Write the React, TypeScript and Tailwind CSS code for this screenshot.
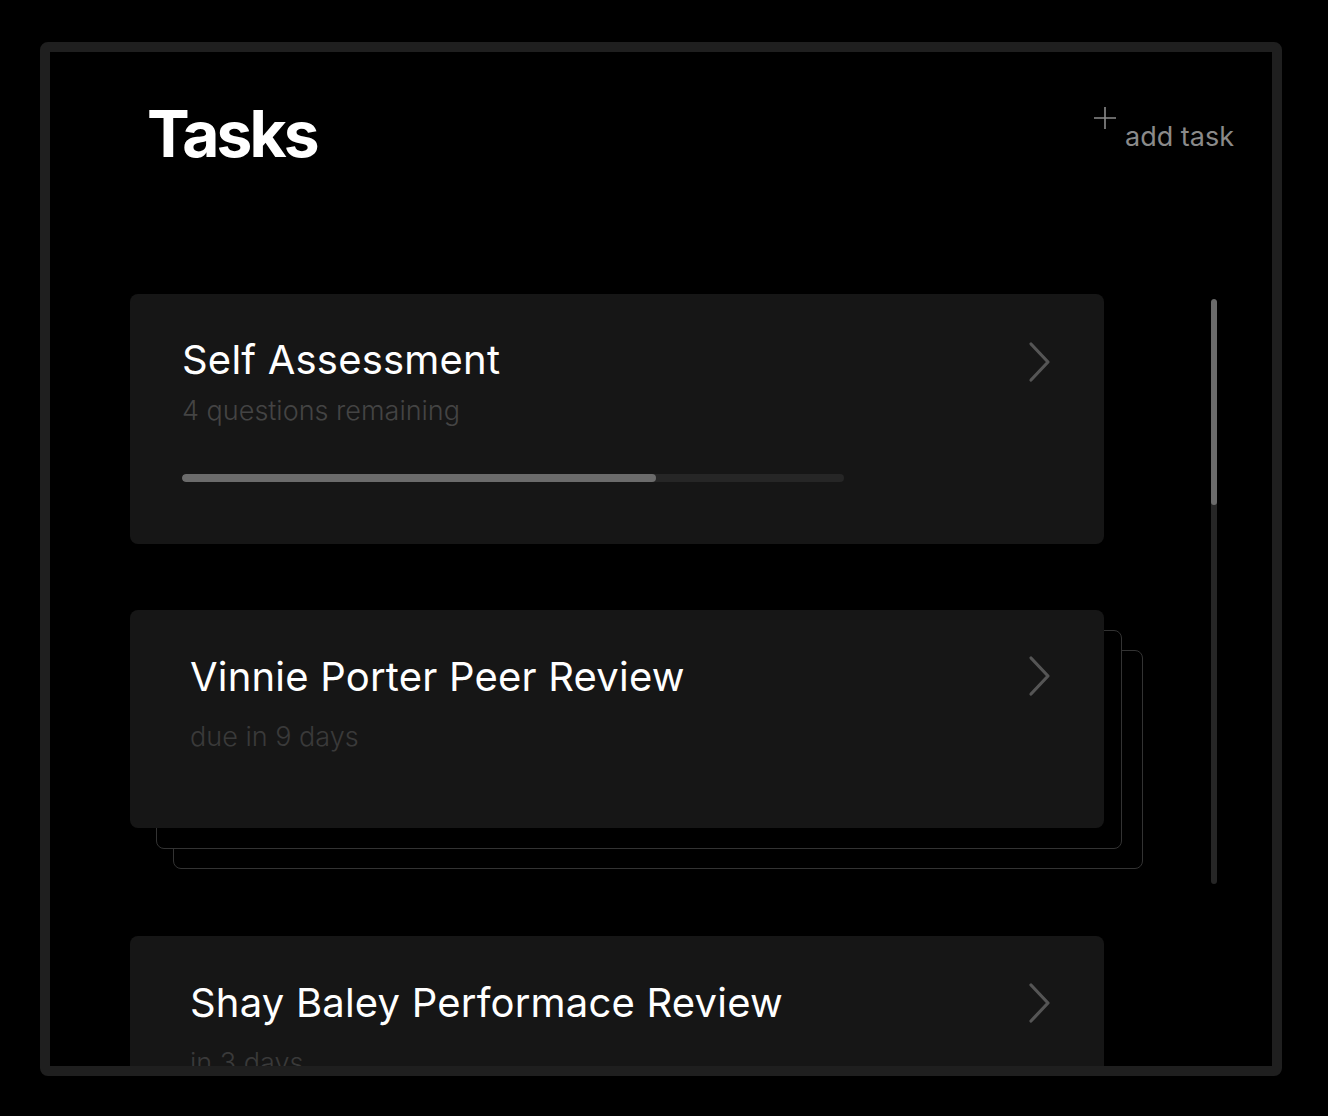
import React from "react";

function Chevron() {
  return (
    <svg width="24" height="42" viewBox="0 0 24 42" fill="none" className="shrink-0">
      <path d="M3 3 L20 21 L3 39" stroke="#555555" strokeWidth="3.2" strokeLinecap="round" strokeLinejoin="round" />
    </svg>
  );
}

export default function App() {
  return (
    <div className="w-[1328px] h-[1116px] bg-black pt-[42px] pl-[40px]" style={{ fontFamily: "Inter, 'Liberation Sans', sans-serif" }}>
      <div className="w-[1242px] h-[1034px] border-[10px] border-[#1f1f1f] rounded-[8px] overflow-hidden flex flex-col">
        <div className="flex justify-between items-start pl-[97px] pr-[38px] pt-[50px] h-[242px] shrink-0">
          <h1 className="text-[64px] font-bold text-white leading-none tracking-[-0.045em]">Tasks</h1>
          <div className="flex items-start text-[#8a8a8a]">
            <svg width="24" height="24" viewBox="0 0 24 24" className="mt-[4px]">
              <path d="M12 1 V23 M1 12 H23" stroke="#8a8a8a" strokeWidth="1.6" />
            </svg>
            <span className="text-[27px] leading-none mt-[21px] ml-[8px]">add task</span>
          </div>
        </div>
        <div className="flex pl-[80px] pr-[55px]">
          <div className="w-[974px] flex flex-col shrink-0">
            <div className="bg-[#161616] rounded-[8px] h-[250px] pl-[52px] pr-[52px] pt-[46px] flex justify-between">
              <div className="flex flex-col">
                <div className="text-[40px] text-white leading-none font-normal tracking-[0.005em]">Self Assessment</div>
                <div className="text-[27px] text-[#444444] leading-none mt-[17px] font-light">4 questions remaining</div>
                <div className="w-[662px] h-[8px] rounded-full bg-[#262626] mt-[50px] overflow-hidden">
                  <div className="h-full w-[474px] rounded-full bg-[#6b6b6b]" />
                </div>
              </div>
              <div className="mt-[1px]"><Chevron /></div>
            </div>

            <div className="relative mt-[66px] h-[260px]">
              <div className="absolute left-[43px] top-[40px] w-[970px] h-[219px] border-[1.5px] border-[#333333] rounded-[8px]" />
              <div className="absolute left-[26px] top-[20px] w-[966px] h-[219px] border-[1.5px] border-[#333333] rounded-[8px] bg-black" />
              <div className="relative bg-[#161616] rounded-[8px] h-[218px] pl-[60px] pr-[52px] pt-[47px] flex justify-between">
                <div className="flex flex-col">
                  <div className="text-[40px] text-white leading-none font-normal tracking-[0.005em]">Vinnie Porter Peer Review</div>
                  <div className="text-[27px] text-[#3a3a3a] leading-none mt-[26px] font-light">due in 9 days</div>
                </div>
                <div className="mt-[-2px]"><Chevron /></div>
              </div>
            </div>

            <div className="mt-[66px] bg-[#161616] rounded-[8px] h-[250px] pl-[60px] pr-[52px] pt-[47px] flex justify-between">
              <div className="flex flex-col">
                <div className="text-[40px] text-white leading-none font-normal tracking-[0.005em]">Shay Baley Performace Review</div>
                <div className="text-[27px] text-[#3a3a3a] leading-none mt-[26px] font-light">in 3 days</div>
              </div>
              <div className="mt-[-1px]"><Chevron /></div>
            </div>
          </div>
          <div className="ml-auto mt-[5px] w-[6px] h-[585px] rounded-full bg-[#262626] overflow-hidden">
            <div className="w-full h-[206px] rounded-full bg-[#6b6b6b]" />
          </div>
        </div>
      </div>
    </div>
  );
}
